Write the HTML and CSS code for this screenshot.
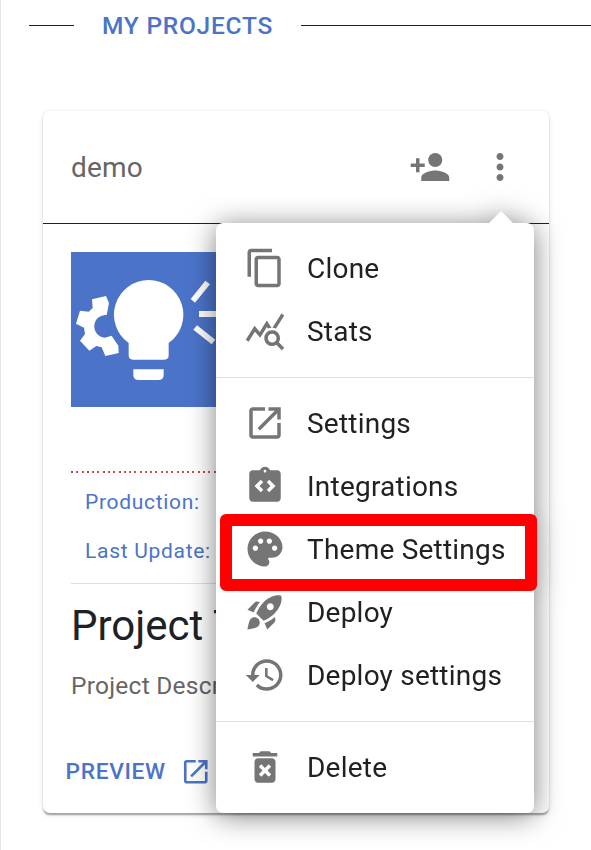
FILE: index.html
```html
<!DOCTYPE html>
<html lang="en">
<head>
<meta charset="utf-8">
<title>My Projects</title>
<link rel="stylesheet" href="styles.css">
</head>
<body>
<main class="page">
  <h1 class="section-title"><span>MY PROJECTS</span></h1>

  <article class="card">
    <header class="card-header">
      <span class="card-name">demo</span>
      <svg class="icon" viewBox="0 0 24 24"><path d="M15 12c2.21 0 4-1.79 4-4s-1.79-4-4-4-4 1.79-4 4 1.79 4 4 4zm-9-2V7H4v3H1v2h3v3h2v-3h3v-2H6zm9 4c-2.67 0-8 1.34-8 4v2h16v-2c0-2.66-5.33-4-8-4z"/></svg>
      <svg class="icon" viewBox="0 0 24 24"><path d="M12 8c1.100 0 2-.9 2-2s-.9-2-2-2-2 .9-2 2 .9 2 2 2zm0 2c-1.100 0-2 .9-2 2s.9 2 2 2 2-.9 2-2-.9-2-2-2zm0 6c-1.100 0-2 .9-2 2s.9 2 2 2 2-.9 2-2-.9-2-2-2z"/></svg>
    </header>
    <div class="card-body">
      <svg class="cover" viewBox="33 36 600 465">
        <rect x="33" y="36" width="600" height="465" fill="#4b74c9"/>
        <g fill="#fff">
          <path d="M96 178L138 168L147 190L140 225A34 34 0 1 0 134 293L155 287L175 317L176 339L136 348L125 322L109 318L88 332L60 302L75 282L72 263L48 251L60 212L86 215L98 204Z"/>
          <path d="M266 120A104 104 0 0 1 326 309V346Q326 359 313 359H219Q206 359 206 346V309A104 104 0 0 1 266 120Z"/>
          <path d="M220 388H311V404Q311 420 295 420H236Q220 420 220 404Z"/>
          <path d="M436 122L450 133L405 188L392 177ZM417 213H480V231H417ZM411 256L466 299L455 313L400 269Z"/>
        </g>
      </svg>
      <div class="dots"></div>
      <dl class="facts">
        <dt>Production:</dt>
        <dt>Last Update:</dt>
      </dl>
      <h2 class="title">Project Title</h2>
      <p class="description">Project Description</p>
    </div>
    <footer class="card-footer">
      <span>PREVIEW</span>
      <svg class="icon-preview" viewBox="0 0 24 24"><path d="M19 19H5V5h7V3H5c-1.110 0-2 .9-2 2v14c0 1.100.89 2 2 2h14c1.100 0 2-.9 2-2v-7h-2v7zM14 3v2h3.590l-9.830 9.830 1.410 1.410L19 6.410V10h2V3h-7z"/></svg>
    </footer>
  </article>

  <nav class="menu">
    <a class="item"><svg class="icon" viewBox="0 0 24 24"><path d="M16 1H4c-1.100 0-2 .9-2 2v14h2V3h12V1zm3 4H8c-1.100 0-2 .9-2 2v14c0 1.100.9 2 2 2h11c1.100 0 2-.9 2-2V7c0-1.100-.9-2-2-2zm0 16H8V7h11v14z"/></svg><span>Clone</span></a>
    <a class="item"><svg class="icon" viewBox="0 0 24 24"><path d="M19.880 18.470c.44-.7.7-1.510.7-2.390 0-2.490-2.010-4.500-4.500-4.500s-4.500 2.010-4.500 4.500 2.010 4.500 4.490 4.500c.88 0 1.700-.26 2.390-.7L21.580 23 23 21.580l-3.120-3.110zm-3.800.11c-1.380 0-2.500-1.120-2.500-2.500s1.120-2.500 2.500-2.500 2.500 1.120 2.500 2.500-1.120 2.500-2.500 2.500zm-.36-8.500c-.74.02-1.450.18-2.100.45l-.55-.83-3.800 6.180-3.010-3.520-3.630 5.810L1 17l5-8 3 3.500L13 6l2.720 4.080zm2.590.5c-.64-.28-1.330-.45-2.050-.49L21.380 2 23 3.180l-4.690 7.400z"/></svg><span>Stats</span></a>
    <hr>
    <a class="item"><svg class="icon" viewBox="0 0 24 24"><path d="M19 19H5V5h7V3H5c-1.110 0-2 .9-2 2v14c0 1.100.89 2 2 2h14c1.100 0 2-.9 2-2v-7h-2v7zM14 3v2h3.590l-9.830 9.830 1.410 1.410L19 6.410V10h2V3h-7z"/></svg><span>Settings</span></a>
    <a class="item"><svg class="icon" viewBox="0 0 24 24"><path fill-rule="evenodd" d="M19 3h-4.180C14.400 1.840 13.300 1 12 1s-2.400.84-2.820 2H5c-1.100 0-2 .9-2 2v14c0 1.100.9 2 2 2h14c1.100 0 2-.9 2-2V5c0-1.100-.9-2-2-2zM11 14.170l-1.410 1.410L6 12l3.590-3.580L11 9.830 8.830 12 11 14.170zM12 4.250c-.41 0-.75-.34-.75-.75s.34-.75.75-.75.75.34.75.75-.34.75-.75.75zM14.410 15.580L13 14.170 15.170 12 13 9.830l1.410-1.410L18 12l-3.590 3.580z"/></svg><span>Integrations</span></a>
    <a class="item marked"><svg class="icon" viewBox="0 0 24 24"><path d="M12 2C6.490 2 2 6.490 2 12s4.490 10 10 10c1.380 0 2.500-1.120 2.500-2.500 0-.61-.23-1.200-.64-1.670-.08-.1-.13-.21-.13-.33 0-.28.22-.5.5-.5H16c3.310 0 6-2.690 6-6 0-4.960-4.490-9-10-9zm5.500 11c-.83 0-1.500-.67-1.500-1.500s.67-1.500 1.500-1.500 1.500.67 1.500 1.500-.67 1.500-1.500 1.500zm-3-4c-.83 0-1.500-.67-1.500-1.500S13.670 6 14.500 6s1.500.67 1.500 1.500S15.330 9 14.500 9zM5 11.500c0-.83.67-1.500 1.500-1.500s1.500.67 1.500 1.500S7.330 13 6.500 13 5 12.330 5 11.500zm6-4c0 .83-.67 1.500-1.500 1.500S8 8.330 8 7.500 8.670 6 9.500 6s1.500.67 1.500 1.500z"/></svg><span>Theme Settings</span></a>
    <a class="item"><svg class="icon" viewBox="0 0 24 24"><path d="M9.190 6.350c-2.040 2.290-3.440 5.580-3.570 5.890L2 10.690l4.050-4.050c.47-.47 1.150-.68 1.810-.55l1.330.26zM11.170 17s3.740-1.550 5.890-3.700c5.400-5.400 4.500-9.620 4.210-10.570-.95-.3-5.170-1.190-10.570 4.210C8.550 9.090 7 12.830 7 12.830L11.170 17zm6.480-2.190c-2.290 2.040-5.580 3.440-5.890 3.570L13.310 22l4.050-4.050c.47-.47.68-1.150.55-1.810l-.26-1.330zM9 18c0 .83-.34 1.580-.88 2.120C6.940 21.300 2 22 2 22s.7-4.940 1.880-6.120C4.420 15.340 5.170 15 6 15c1.660 0 3 1.340 3 3zm4-9c0-1.100.9-2 2-2s2 .9 2 2-.9 2-2 2-2-.9-2-2z"/></svg><span>Deploy</span></a>
    <a class="item"><svg class="icon" viewBox="0 0 24 24"><path d="M13 3c-4.970 0-9 4.030-9 9H1l3.890 3.890.07.14L9 12H6c0-3.870 3.130-7 7-7s7 3.130 7 7-3.130 7-7 7c-1.930 0-3.680-.79-4.940-2.060l-1.420 1.420C8.270 19.990 10.510 21 13 21c4.970 0 9-4.030 9-9s-4.030-9-9-9zm-1 5v5l4.280 2.540.72-1.210-3.500-2.080V8H12z"/></svg><span>Deploy settings</span></a>
    <hr>
    <a class="item"><svg class="icon" viewBox="0 0 24 24"><path d="M6 19c0 1.100.9 2 2 2h8c1.100 0 2-.9 2-2V9c0-1.100-.9-2-2-2H8c-1.100 0-2 .9-2 2v10zm2.460-7.120l1.410-1.410L12 12.590l2.120-2.120 1.410 1.410L13.410 14l2.120 2.120-1.410 1.410L12 15.410l-2.120 2.120-1.410-1.410L10.590 14l-2.130-2.120zM15.500 4l-1-1h-5l-1 1H5v2h14V4z"/></svg><span>Delete</span></a>
  </nav>
</main>
</body>
</html>
```
FILE: styles.css
```css
*,
*::before,
*::after { box-sizing: border-box; }

body {
  margin: 0;
  background: #fff;
  color: #212121;
  font-family: Roboto, "Liberation Sans", sans-serif;
}

.page {
  position: relative;
  height: 850px;
  overflow: hidden;
  border-left: 1px solid #e6e6e6;
}

.section-title {
  display: flex;
  align-items: center;
  gap: 28px;
  height: 51px;
  margin: 0 0 60px 28px;
  color: #4b74c9;
  font-size: 24.5px;
  font-weight: 500;
  letter-spacing: 0.75px;
  white-space: nowrap;
}

.section-title::before,
.section-title::after {
  content: "";
  height: 1px;
  background: #212121;
}

.section-title::before { width: 45px; }
.section-title::after { flex: 1; }

.card {
  display: flex;
  flex-direction: column;
  width: 506px;
  height: 702px;
  margin-left: 42px;
  overflow: hidden;
  border-radius: 7px;
  background: #fff;
  box-shadow:
    0 3.5px 1.75px -1.75px rgba(0, 0, 0, 0.2),
    0 1.75px 1.75px rgba(0, 0, 0, 0.14),
    0 1.75px 5.25px rgba(0, 0, 0, 0.12);
}

.card-header {
  display: flex;
  align-items: center;
  gap: 28px;
  height: 113px;
  padding: 0 28px;
  border-bottom: 1px solid #212121;
}

.card-name {
  flex: 1;
  color: #666;
  font-size: 28px;
  letter-spacing: 0.2px;
}

.icon {
  flex: none;
  width: 42px;
  height: 42px;
  fill: #757575;
}

.card-body { padding: 28px 28px 0; }

.cover {
  display: block;
  width: 200px;
  height: 155px;
}

.dots {
  height: 2px;
  margin-top: 64px;
  background: repeating-linear-gradient(90deg, #c0504d 0 2px, transparent 2px 5.28px);
}

.facts {
  height: 111px;
  margin: 0;
  padding: 5px 14px 0;
  border-bottom: 1px solid #e0e0e0;
  color: #4b74c9;
  font-size: 21px;
  line-height: 49px;
  letter-spacing: 0.7px;
}

.title {
  margin: 14px 0 0;
  font-size: 42px;
  font-weight: 400;
  line-height: 56px;
}

.description {
  margin: 14px 0 0;
  color: #666;
  font-size: 24.5px;
  line-height: 35px;
  letter-spacing: 0.25px;
}

.card-footer {
  display: flex;
  align-items: center;
  gap: 14px;
  height: 84px;
  margin-top: auto;
  padding-left: 22.5px;
  color: #4b74c9;
  font-size: 22.75px;
  font-weight: 500;
  letter-spacing: 0.65px;
}

.icon-preview {
  width: 31.5px;
  height: 31.5px;
  margin-top: 2px;
  fill: #4b74c9;
}

.menu {
  position: absolute;
  top: 223px;
  left: 215px;
  width: 318px;
  height: 590px;
  padding: 14px 0;
  border-radius: 7px;
  background: #fff;
  filter: drop-shadow(0 3.5px 14px rgba(0, 0, 0, 0.5));
}

.menu::before {
  content: "";
  position: absolute;
  top: -12.5px;
  right: 21px;
  border: 12.5px solid transparent;
  border-top: 0;
  border-bottom-color: #fff;
}

.item {
  position: relative;
  display: flex;
  align-items: center;
  gap: 21px;
  height: 63px;
  padding: 0 28px;
  font-size: 28px;
  letter-spacing: 0.22px;
  white-space: nowrap;
}

.item .icon { margin-bottom: 1px; }

.menu hr {
  height: 1px;
  margin: 14px 0;
  border: 0;
  background: #e0e0e0;
}

.marked::after {
  content: "";
  position: absolute;
  z-index: 1;
  top: -4px;
  left: 4px;
  width: 317px;
  height: 77px;
  border: 12px solid #f00;
  border-radius: 6px;
}
```
